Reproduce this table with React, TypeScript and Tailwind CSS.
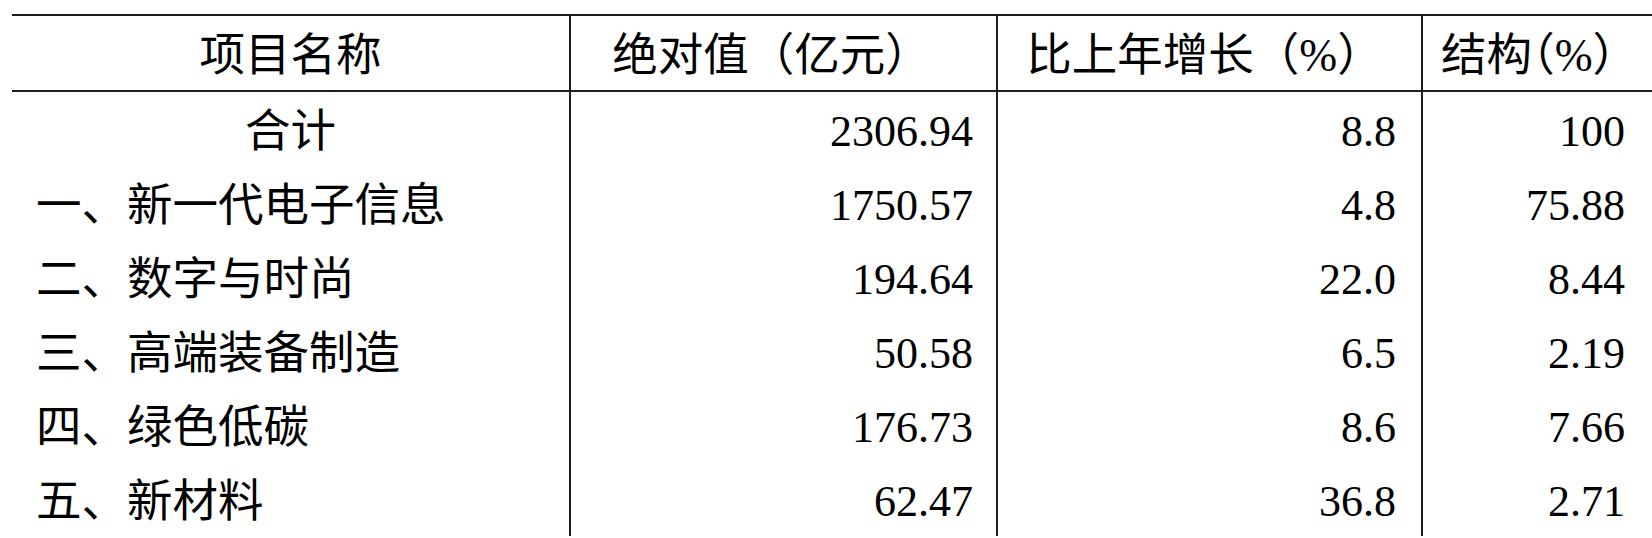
const rows = [
  { name: "合计", value: "2306.94", growth: "8.8", share: "100", center: true },
  { name: "一、新一代电子信息", value: "1750.57", growth: "4.8", share: "75.88" },
  { name: "二、数字与时尚", value: "194.64", growth: "22.0", share: "8.44" },
  { name: "三、高端装备制造", value: "50.58", growth: "6.5", share: "2.19" },
  { name: "四、绿色低碳", value: "176.73", growth: "8.6", share: "7.66" },
  { name: "五、新材料", value: "62.47", growth: "36.8", share: "2.71" },
];

const grid = "grid grid-cols-[557px_427px_425px_231px]";
const cell = "flex items-center h-[74px] leading-[48px] pt-[5px]";
const line = "border-l-2 border-[#1c1c1c]";

export default function App() {
  return (
    <div className="w-[1652px] h-[538px] overflow-hidden bg-white pt-[14px] pl-[12px] text-black text-[44px] font-['Liberation_Serif','Noto_Sans_CJK_SC',serif]">
      <div className="w-[1640px] border-t-2 border-[#1c1c1c]">
        {/* header */}
        <div className={`${grid} border-b-2 border-[#1c1c1c] text-[45.5px]`}>
          <div className={`${cell} justify-center`}>项目名称</div>
          <div className={`${cell} ${line} justify-center pr-[24px]`}>绝对值（亿元）</div>
          <div className={`${cell} ${line} justify-center pr-[10px]`}>比上年增长（%）</div>
          <div className={`${cell} ${line} justify-center pl-[4px]`}>
            结构<span className="[font-feature-settings:'halt']">（</span>%）
          </div>
        </div>

        {rows.map((r) => (
          <div key={r.name} className={grid}>
            <div className={`${cell} text-[45.5px] ${r.center ? "justify-center" : "pl-[24px]"}`}>{r.name}</div>
            <div className={`${cell} ${line} justify-end pr-[23px]`}>{r.value}</div>
            <div className={`${cell} ${line} justify-end pr-[25px]`}>{r.growth}</div>
            <div className={`${cell} ${line} justify-end pr-[27px]`}>{r.share}</div>
          </div>
        ))}
      </div>
    </div>
  );
}
